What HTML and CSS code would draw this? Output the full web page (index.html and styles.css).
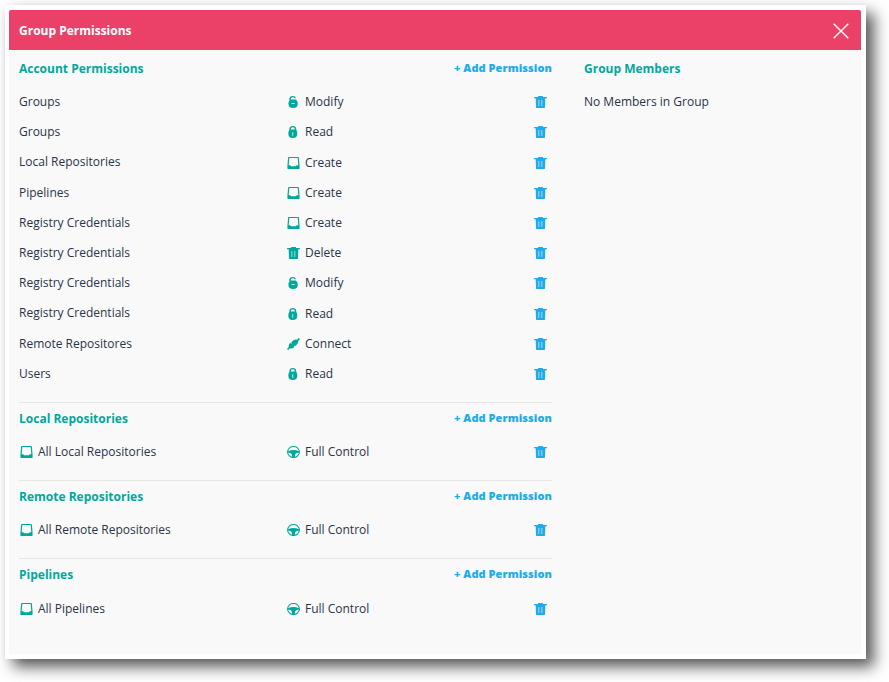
FILE: index.html
```html
<!DOCTYPE html>
<html lang="en">
<head>
<meta charset="utf-8">
<title>Group Permissions</title>
<link rel="stylesheet" href="styles.css">
</head>
<body>
<svg class="sprite" aria-hidden="true">
  <symbol id="trash" viewBox="0 0 13 12"><path fill-rule="evenodd" d="M4 1V.5Q4 0 4.500 0H8.500Q9 0 9 .5V1H12.500Q13 1 13 1.500V2.300H11.300L11 11.300Q11 12 10.300 12H2.700Q2 12 2 11.300L1.700 2.300H0V1.500Q0 1 .5 1ZM4.600 4V10H5.200V4ZM7.600 4V10H8.200V4Z"/></symbol>
  <symbol id="tray" viewBox="0 0 13 12"><path fill-rule="evenodd" d="M1.800 0H11.200Q11.800 0 11.900.7L12.600 9V11.300Q12.600 12 12 12H1Q.4 12 .4 11.300V9L1.100.7Q1.200 0 1.800 0ZM2.300 1.100L1.700 8.300H3.200L4.100 9.300H8.900L9.800 8.300H11.300L10.700 1.100Z"/></symbol>
  <symbol id="lock" viewBox="0 0 13 12"><path fill-rule="evenodd" d="M2.300 4V3.300Q2.600 0 5.800 0T9.300 3.300V4Q10.300 5.200 10.300 7.500Q10.300 12 5.800 12T1.300 7.500Q1.300 5.200 2.300 4ZM3.700 3.500H7.900Q7.900 1.200 5.800 1.200T3.700 3.500ZM5.400 6.300V9.700H6.200V6.300Z"/></symbol>
  <symbol id="unlock" viewBox="0 0 13 12"><path fill-rule="evenodd" d="M2.200 3.800Q2 0 5.800 0Q8.700 0 9 2.300H7.700Q7.300 1.200 5.800 1.200Q3.600 1.200 3.700 3.600H8.900Q10.800 5 10.800 7.500Q10.800 12 6.100 12T1.400 7.500Q1.400 5.200 2.800 4.200ZM4.500 7.200V8.100H7.700V7.200Z"/></symbol>
  <symbol id="plug" viewBox="0 0 13 12"><path d="M11.900 0L13 .9L11.300 3Q11.500 5.200 9.400 7.100L8 8.300L7.500 7.700L6.900 8.300L7.300 8.900Q5.200 11 3 10.200L1 12L0 11L1.800 9.100Q1.100 6.900 3.200 4.800L4.200 5.700L4.800 5.100L4.200 4.400L5.300 3.300Q7.500 1 9.800 1.800Z"/></symbol>
  <symbol id="wheel" viewBox="0 0 13 12"><ellipse cx="6.500" cy="6" rx="5.900" ry="5.500" fill="none" stroke="currentColor" stroke-width="1.100"/><path d="M.8 5.200Q4 4 6.500 4T12.200 5.200V6.500Q9 6.600 8.200 8.200L7.800 11.300H5.200L4.800 8.200Q4 6.600.8 6.500Z"/></symbol>
</svg>
<div class="frame">
  <header class="titlebar">
    <h1>Group Permissions</h1>
    <svg class="close" viewBox="0 0 16 16"><path d="M.7.7L15.300 15.300M15.300.7L.7 15.300"/></svg>
  </header>
  <main class="body">
    <div class="permissions">
      <section>
        <div class="head"><h2>Account Permissions</h2><a>+ Add Permission</a></div>
        <div class="row"><span>Groups</span><span class="perm"><svg><use href="#unlock"/></svg>Modify</span><svg class="remove"><use href="#trash"/></svg></div>
        <div class="row"><span>Groups</span><span class="perm"><svg><use href="#lock"/></svg>Read</span><svg class="remove"><use href="#trash"/></svg></div>
        <div class="row"><span>Local Repositories</span><span class="perm"><svg><use href="#tray"/></svg>Create</span><svg class="remove"><use href="#trash"/></svg></div>
        <div class="row"><span>Pipelines</span><span class="perm"><svg><use href="#tray"/></svg>Create</span><svg class="remove"><use href="#trash"/></svg></div>
        <div class="row"><span>Registry Credentials</span><span class="perm"><svg><use href="#tray"/></svg>Create</span><svg class="remove"><use href="#trash"/></svg></div>
        <div class="row"><span>Registry Credentials</span><span class="perm"><svg><use href="#trash"/></svg>Delete</span><svg class="remove"><use href="#trash"/></svg></div>
        <div class="row"><span>Registry Credentials</span><span class="perm"><svg><use href="#unlock"/></svg>Modify</span><svg class="remove"><use href="#trash"/></svg></div>
        <div class="row"><span>Registry Credentials</span><span class="perm"><svg><use href="#lock"/></svg>Read</span><svg class="remove"><use href="#trash"/></svg></div>
        <div class="row"><span>Remote Repositores</span><span class="perm"><svg><use href="#plug"/></svg>Connect</span><svg class="remove"><use href="#trash"/></svg></div>
        <div class="row"><span>Users</span><span class="perm"><svg><use href="#lock"/></svg>Read</span><svg class="remove"><use href="#trash"/></svg></div>
      </section>
      <section>
        <div class="head"><h2>Local Repositories</h2><a>+ Add Permission</a></div>
        <div class="row"><span class="perm scope"><svg><use href="#tray"/></svg>All Local Repositories</span><span class="perm"><svg><use href="#wheel"/></svg>Full Control</span><svg class="remove"><use href="#trash"/></svg></div>
      </section>
      <section>
        <div class="head"><h2>Remote Repositories</h2><a>+ Add Permission</a></div>
        <div class="row"><span class="perm scope"><svg><use href="#tray"/></svg>All Remote Repositories</span><span class="perm"><svg><use href="#wheel"/></svg>Full Control</span><svg class="remove"><use href="#trash"/></svg></div>
      </section>
      <section>
        <div class="head"><h2>Pipelines</h2><a>+ Add Permission</a></div>
        <div class="row"><span class="perm scope"><svg><use href="#tray"/></svg>All Pipelines</span><span class="perm"><svg><use href="#wheel"/></svg>Full Control</span><svg class="remove"><use href="#trash"/></svg></div>
      </section>
    </div>
    <aside class="members">
      <div class="head"><h2>Group Members</h2></div>
      <div class="row">No Members in Group</div>
    </aside>
  </main>
</div>
</body>
</html>
```

FILE: styles.css
```css
* { box-sizing: border-box; }
body {
  margin: 0;
  height: 682px;
  padding: 5px;
  overflow: hidden;
  background: #fff;
  color: #2a3448;
  font: 12px/18px "Open Sans", sans-serif;
}
h1, h2 { margin: 0; font-size: 12px; font-weight: 700; }
.sprite { display: none; }
.frame {
  width: 861px;
  height: 654px;
  padding: 5px 5px 5px 4px;
  background: #fff;
  box-shadow: 8px 8px 14px rgba(0, 0, 0, .65), 0 0 6px rgba(0, 0, 0, .04);
}
.titlebar {
  display: flex;
  align-items: center;
  justify-content: space-between;
  height: 40px;
  padding: 2px 12px 0 10px;
  border-radius: 2px 2px 0 0;
  background: #eb4168;
  color: #fff;
}
.close {
  width: 16px;
  height: 16px;
  margin-top: -1px;
  fill: none;
  stroke: #fff;
  stroke-width: 1.4;
}
.body {
  display: grid;
  grid-template-columns: 533px 1fr;
  column-gap: 32px;
  height: 604px;
  padding: 3px 10px 0;
  background: #f9f9f9;
}
section { padding-bottom: 13px; }
section + section { border-top: 1px solid #e4e6e7; }
.head {
  display: flex;
  align-items: center;
  justify-content: space-between;
  height: 32px;
  margin-bottom: 2px;
  color: #00a89c;
}
section + section .head { height: 30px; margin-bottom: 4px; }
section + section h2 { padding-top: 2px; }
section:last-child .head { margin-bottom: 4.500px; }
.head a {
  color: #1dace9;
  font-size: 11px;
  font-weight: 800;
  line-height: 20px;
  letter-spacing: .06px;
}
section:first-child .head a { margin-top: -2px; }
section:last-child .row { margin-top: 4.500px; }
section:last-child .head { margin-bottom: 0; }
.row {
  display: grid;
  grid-template-columns: 267px 1fr 19px;
  align-items: center;
  height: 30.200px;
}
.members .row { display: flex; }
.row svg { width: 13px; height: 12px; fill: currentColor; color: #00a89c; }
.perm { display: flex; align-items: center; padding-top: .3px; }
.perm svg { flex: none; margin: 0 5px 0 1px; }
.row .remove { margin: .300px 0 0 1px; color: #1dace9; }
```
